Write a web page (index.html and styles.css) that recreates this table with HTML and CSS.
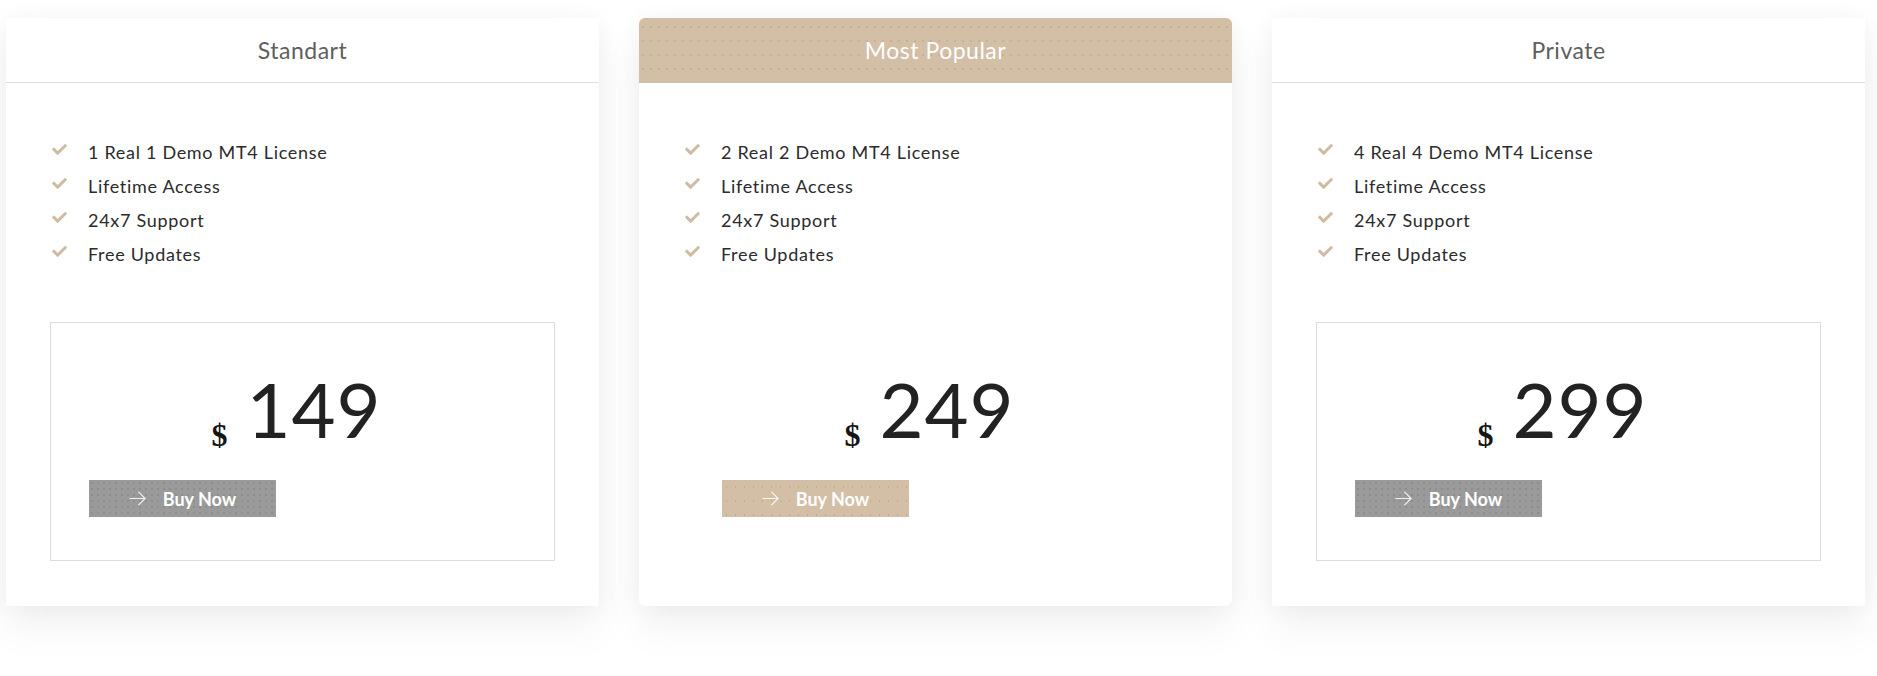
FILE: index.html
```html
<!DOCTYPE html>
<html lang="en">
<head>
<meta charset="utf-8">
<title>Pricing</title>
<link rel="stylesheet" href="styles.css">
</head>
<body>
<div class="pricing">
  <div class="card">
    <div class="card-head">Standart</div>
    <ul class="features">
      <li><svg class="check" viewBox="0 0 512 380"><path d="M173.9 371.4l-166.4-166.4c-10-10-10-26.2 0-36.2l36.2-36.2c10-10 26.2-10 36.2 0L192 244.7 432.1 4.6c10-10 26.2-10 36.2 0l36.2 36.2c10 10 10 26.2 0 36.2L210.1 371.4c-10 10-26.2 10-36.2 0z"/></svg>1 Real 1 Demo MT4 License</li>
      <li><svg class="check" viewBox="0 0 512 380"><path d="M173.9 371.4l-166.4-166.4c-10-10-10-26.2 0-36.2l36.2-36.2c10-10 26.2-10 36.2 0L192 244.7 432.1 4.6c10-10 26.2-10 36.2 0l36.2 36.2c10 10 10 26.2 0 36.2L210.1 371.4c-10 10-26.2 10-36.2 0z"/></svg>Lifetime Access</li>
      <li><svg class="check" viewBox="0 0 512 380"><path d="M173.9 371.4l-166.4-166.4c-10-10-10-26.2 0-36.2l36.2-36.2c10-10 26.2-10 36.2 0L192 244.7 432.1 4.6c10-10 26.2-10 36.2 0l36.2 36.2c10 10 10 26.2 0 36.2L210.1 371.4c-10 10-26.2 10-36.2 0z"/></svg>24x7 Support</li>
      <li><svg class="check" viewBox="0 0 512 380"><path d="M173.9 371.4l-166.4-166.4c-10-10-10-26.2 0-36.2l36.2-36.2c10-10 26.2-10 36.2 0L192 244.7 432.1 4.6c10-10 26.2-10 36.2 0l36.2 36.2c10 10 10 26.2 0 36.2L210.1 371.4c-10 10-26.2 10-36.2 0z"/></svg>Free Updates</li>
    </ul>
    <div class="price-box">
      <div class="price"><span class="cur">$</span>149</div>
      <a class="buy" href="#"><svg class="arrow" viewBox="0 0 18 18"><path d="M0.5 9H17M10 2l7 7-7 7"/></svg>Buy Now</a>
    </div>
  </div>

  <div class="card card-popular">
    <div class="card-head">Most Popular</div>
    <ul class="features">
      <li><svg class="check" viewBox="0 0 512 380"><path d="M173.9 371.4l-166.4-166.4c-10-10-10-26.2 0-36.2l36.2-36.2c10-10 26.2-10 36.2 0L192 244.7 432.1 4.6c10-10 26.2-10 36.2 0l36.2 36.2c10 10 10 26.2 0 36.2L210.1 371.4c-10 10-26.2 10-36.2 0z"/></svg>2 Real 2 Demo MT4 License</li>
      <li><svg class="check" viewBox="0 0 512 380"><path d="M173.9 371.4l-166.4-166.4c-10-10-10-26.2 0-36.2l36.2-36.2c10-10 26.2-10 36.2 0L192 244.7 432.1 4.6c10-10 26.2-10 36.2 0l36.2 36.2c10 10 10 26.2 0 36.2L210.1 371.4c-10 10-26.2 10-36.2 0z"/></svg>Lifetime Access</li>
      <li><svg class="check" viewBox="0 0 512 380"><path d="M173.9 371.4l-166.4-166.4c-10-10-10-26.2 0-36.2l36.2-36.2c10-10 26.2-10 36.2 0L192 244.7 432.1 4.6c10-10 26.2-10 36.2 0l36.2 36.2c10 10 10 26.2 0 36.2L210.1 371.4c-10 10-26.2 10-36.2 0z"/></svg>24x7 Support</li>
      <li><svg class="check" viewBox="0 0 512 380"><path d="M173.9 371.4l-166.4-166.4c-10-10-10-26.2 0-36.2l36.2-36.2c10-10 26.2-10 36.2 0L192 244.7 432.1 4.6c10-10 26.2-10 36.2 0l36.2 36.2c10 10 10 26.2 0 36.2L210.1 371.4c-10 10-26.2 10-36.2 0z"/></svg>Free Updates</li>
    </ul>
    <div class="price-box">
      <div class="price"><span class="cur">$</span>249</div>
      <a class="buy" href="#"><svg class="arrow" viewBox="0 0 18 18"><path d="M0.5 9H17M10 2l7 7-7 7"/></svg>Buy Now</a>
    </div>
  </div>

  <div class="card">
    <div class="card-head">Private</div>
    <ul class="features">
      <li><svg class="check" viewBox="0 0 512 380"><path d="M173.9 371.4l-166.4-166.4c-10-10-10-26.2 0-36.2l36.2-36.2c10-10 26.2-10 36.2 0L192 244.7 432.1 4.6c10-10 26.2-10 36.2 0l36.2 36.2c10 10 10 26.2 0 36.2L210.1 371.4c-10 10-26.2 10-36.2 0z"/></svg>4 Real 4 Demo MT4 License</li>
      <li><svg class="check" viewBox="0 0 512 380"><path d="M173.9 371.4l-166.4-166.4c-10-10-10-26.2 0-36.2l36.2-36.2c10-10 26.2-10 36.2 0L192 244.7 432.1 4.6c10-10 26.2-10 36.2 0l36.2 36.2c10 10 10 26.2 0 36.2L210.1 371.4c-10 10-26.2 10-36.2 0z"/></svg>Lifetime Access</li>
      <li><svg class="check" viewBox="0 0 512 380"><path d="M173.9 371.4l-166.4-166.4c-10-10-10-26.2 0-36.2l36.2-36.2c10-10 26.2-10 36.2 0L192 244.7 432.1 4.6c10-10 26.2-10 36.2 0l36.2 36.2c10 10 10 26.2 0 36.2L210.1 371.4c-10 10-26.2 10-36.2 0z"/></svg>24x7 Support</li>
      <li><svg class="check" viewBox="0 0 512 380"><path d="M173.9 371.4l-166.4-166.4c-10-10-10-26.2 0-36.2l36.2-36.2c10-10 26.2-10 36.2 0L192 244.7 432.1 4.6c10-10 26.2-10 36.2 0l36.2 36.2c10 10 10 26.2 0 36.2L210.1 371.4c-10 10-26.2 10-36.2 0z"/></svg>Free Updates</li>
    </ul>
    <div class="price-box">
      <div class="price"><span class="cur">$</span>299</div>
      <a class="buy" href="#"><svg class="arrow" viewBox="0 0 18 18"><path d="M0.5 9H17M10 2l7 7-7 7"/></svg>Buy Now</a>
    </div>
  </div>
</div>
</body>
</html>
```

FILE: styles.css
```css
* { box-sizing: border-box; }

html, body {
  margin: 0;
  padding: 0;
  background: #ffffff;
}

body {
  font-family: Lato, "Open Sans", "Liberation Sans", sans-serif;
  color: #2c2c2c;
  min-height: 676px;
}

.pricing {
  display: flex;
  gap: 40px;
  padding: 18px 0 70px 6px;
}

.card {
  width: 593px;
  height: 588px;
  background: #ffffff;
  box-shadow: 0 0 22px rgba(0, 0, 0, 0.045), 0 22px 40px rgba(0, 0, 0, 0.055);
  display: flex;
  flex-direction: column;
}

.card-head {
  height: 65px;
  line-height: 64px;
  border-bottom: 1px solid #dedede;
  text-align: center;
  font-size: 23px;
  letter-spacing: 0.5px;
  color: #5e5e5e;
}

.card-popular {
  border-radius: 6px;
}

.card-popular .card-head {
  border-radius: 6px 6px 0 0;
  border-bottom-color: #d3bea6;
  color: #ffffff;
  background-color: #d3bea6;
  background-image: radial-gradient(circle, rgba(176, 128, 108, 0.35) 0.6px, transparent 1px);
  background-size: 8px 14px;
  background-position: 0 2px;
}

.features {
  list-style: none;
  margin: 0;
  padding: 52px 46px 0;
}

.features li {
  display: flex;
  align-items: center;
  height: 34px;
  font-size: 18px;
  letter-spacing: 0.7px;
  color: #2b2b2b;
}

.check {
  width: 15px;
  height: 11px;
  fill: #cfbba2;
  margin-right: 21px;
  flex: none;
  position: relative;
  top: -3px;
}

.price-box {
  margin: 51px 44px 0;
  height: 239px;
  border: 1px solid #dcdcdc;
  padding: 47px 38px 0;
}

.card-popular .price-box {
  border-color: transparent;
}

.price {
  text-align: center;
  font-size: 76px;
  line-height: 77px;
  color: #222222;
  letter-spacing: 1px;
  padding-right: 12px;
}

.cur {
  font-family: "Liberation Serif", "Times New Roman", serif;
  font-weight: bold;
  font-size: 32px;
  color: #151515;
  vertical-align: -8px;
  margin-right: 19px;
  letter-spacing: 0;
}

.buy {
  margin-top: 6px;
  width: 187px;
  height: 37px;
  display: flex;
  align-items: center;
  justify-content: center;
  gap: 17px;
  text-decoration: none;
  color: #ffffff;
  font-weight: bold;
  font-size: 18px;
  background-color: #9a9a9a;
  background-image: radial-gradient(circle, rgba(120, 120, 120, 0.5) 0.6px, transparent 1px);
  background-size: 6px 6px;
}

.card-popular .buy {
  background-color: #d3bea6;
  background-image: radial-gradient(circle, rgba(176, 128, 108, 0.35) 0.6px, transparent 1px);
  background-size: 9px 14px;
}

.arrow {
  width: 17px;
  height: 17px;
  fill: none;
  stroke: rgba(255, 255, 255, 0.85);
  stroke-width: 1.3;
}
```
